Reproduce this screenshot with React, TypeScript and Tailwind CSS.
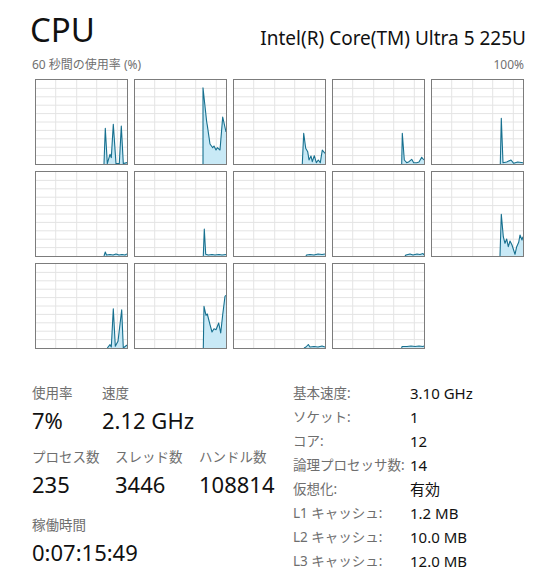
import React from 'react';

// 各論理プロセッサのグラフ (内側 91x84 の座標)
const graphs: string[] = [
  '68,84 69.3,48.3 71.3,83.6 74,74.3 75.3,77.6 77.3,44.3 80,83.6 83.3,83.6 85.3,46 87.3,83.6 91,82.6',
  '68,84 68,7.7 71.7,42 72.3,45.3 75,64 77.7,67.7 79,66 81,70 82.3,67.7 85,70 87.7,37 91,52',
  '68.3,84 69.7,53.3 71.7,68.3 73.7,71.7 75,80 77,76 78.3,81.7 80.3,75.7 82.3,82.7 84.3,80 86.3,82.7 88.3,70 91,73.3',
  '68.7,84 69.3,53.3 71.3,80 73.7,82.7 76,81.7 78.7,79.3 80.7,82.7 83.7,82.7 86,82 88.7,77.3 91,80',
  '68.3,84 69.3,38.3 71,82.7 74.7,82 79,80 81.7,83.3 85.7,82 91,82.7',
  '68,84 69.3,80 70.5,83 74,82.5 77,83 80,82 83,83 86,82.5 89,83 91,82',
  '68.3,84 69.3,57 70.7,82.3 73.3,83 77,82.5 80,83 84,82.5 87,83 91,82.5',
  '72,84 72.5,83 76,82.5 80,83 84,82 88,82.5 91,82',
  '72,84 73,83 77,82 80,83 84,82 87,82.5 90,81.5 91,83',
  '68,84 69.3,42.3 71.3,64.7 73,71.3 74.7,67 76.3,74.7 78,69 80,73 81.3,77 83,82.3 84.7,74.7 86.7,70.3 88,63 90,68 91,64.7',
  '71.3,84 74,80.7 75.3,83 77.3,44.7 79.3,82.3 82,77.3 85.7,45.7 87.3,84 90.7,81.3 91,82',
  '68.3,84 69,42.3 71,51.3 72.3,50 75,60.7 77,68 79,64.7 81,65.7 83.7,59 85.7,69 87.7,50.7 90,32.3 91,31.3',
  '70,84 72,83 74.3,80.5 76,83 80,82.5 84,83 88,82 91,83',
  '68.7,84 69,82.5 74,82.5 78,82 82,82.5 86,82 90,82.5 91,82',
];

const vLines = [19.7, 40.7, 60.7, 81.3];
const hLines = [1, 2, 3, 4, 5, 6, 7, 8, 9].map((k) => k * 8.4);

const Graph = ({ pts }: { pts: string }) => (
  <div className="h-[86px] border border-[#7c7c7c] bg-white">
    <svg viewBox="0 0 91 84" preserveAspectRatio="none" className="block w-full h-full">
      {vLines.map((x) => (
        <line key={`v${x}`} x1={x} y1={0} x2={x} y2={84} stroke="#e4e4e4" strokeWidth={1} />
      ))}
      {hLines.map((y) => (
        <line key={`h${y}`} x1={0} y1={y} x2={91} y2={y} stroke="#e4e4e4" strokeWidth={1} />
      ))}
      <polygon points={`${pts} 91,84`} fill="#c8e9f6" />
      <polyline points={pts} fill="none" stroke="#17708f" strokeWidth={1.1} strokeLinejoin="round" />
    </svg>
  </div>
);

const Stat = ({ label, value, w }: { label: string; value: string; w: string }) => (
  <div className={`flex flex-col whitespace-nowrap ${w}`}>
    <span className="text-[13.5px] leading-[16px] text-[#6e6e6e]">{label}</span>
    <span className="mt-[6px] text-[22px] leading-[26px] text-[#111]">{value}</span>
  </div>
);

const specs: [string, string][] = [
  ['基本速度:', '3.10 GHz'],
  ['ソケット:', '1'],
  ['コア:', '12'],
  ['論理プロセッサ数:', '14'],
  ['仮想化:', '有効'],
  ['L1 キャッシュ:', '1.2 MB'],
  ['L2 キャッシュ:', '10.0 MB'],
  ['L3 キャッシュ:', '12.0 MB'],
];

export default function App() {
  return (
    <div className="w-[536px] h-[578px] overflow-hidden bg-white pl-[32px] pr-[12px] pt-[10px] font-['Noto_Sans','Noto_Sans_CJK_JP',sans-serif]">
      {/* Header */}
      <div className="flex items-end justify-between">
        <h1 className="-ml-[2px] text-[33px] leading-[40px] text-[#111]">CPU</h1>
        <div className="-mr-[2px] mb-[1px] text-[19px] leading-[22px] text-[#111]">Intel(R) Core(TM) Ultra 5 225U</div>
      </div>

      <div className="mt-[7px] flex justify-between text-[12px] leading-[16px] text-[#707070]">
        <span>60 秒間の使用率 (%)</span>
        <span>100%</span>
      </div>

      {/* Graphs */}
      <div className="mt-[6px] ml-[3px] grid grid-cols-5 gap-[6px]">
        {graphs.map((g, i) => (
          <Graph key={i} pts={g} />
        ))}
      </div>

      {/* Details */}
      <div className="mt-[32px] flex">
        <div className="w-[261px] shrink-0 pt-[4px]">
          <div className="flex">
            <Stat label="使用率" value="7%" w="w-[70px]" />
            <Stat label="速度" value="2.12 GHz" w="w-[120px]" />
          </div>
          <div className="mt-[16px] flex">
            <Stat label="プロセス数" value="235" w="w-[83px]" />
            <Stat label="スレッド数" value="3446" w="w-[84px]" />
            <Stat label="ハンドル数" value="108814" w="w-[90px]" />
          </div>
          <div className="mt-[20px]">
            <Stat label="稼働時間" value="0:07:15:49" w="w-[150px]" />
          </div>
        </div>
        <div className="flex flex-col whitespace-nowrap text-[13.5px] leading-[24px]">
          {specs.map(([k, v]) => (
            <div key={k} className="flex">
              <span className="w-[117px] shrink-0 text-[#6e6e6e]">{k}</span>
              <span className="text-[15px] text-[#111]">{v}</span>
            </div>
          ))}
        </div>
      </div>
    </div>
  );
}
